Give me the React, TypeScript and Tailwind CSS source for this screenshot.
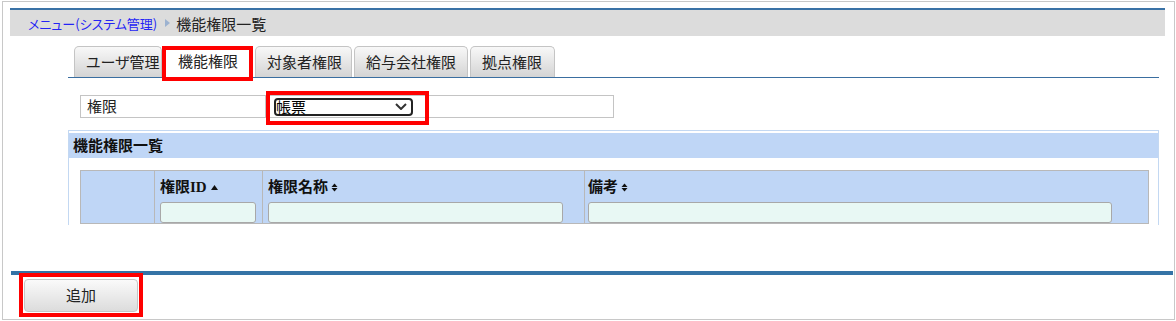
import React from 'react';

const jp = "font-['Noto_Sans_CJK_JP',sans-serif] [font-feature-settings:'palt']";
const head = "font-['Liberation_Serif','Noto_Sans_CJK_JP',serif] font-bold";

const tabs = [
  { label: 'ユーザ管理', w: 'w-[88px]' },
  { label: '機能権限', w: 'w-[89px]', active: true },
  { label: '対象者権限', w: 'w-[97px]' },
  { label: '給与会社権限', w: 'w-[114px]' },
  { label: '拠点権限', w: 'w-[85px]' },
];

function SortUp() {
  return (
    <svg width="7" height="5" viewBox="0 0 7 5" className="ml-[4px]">
      <path d="M0 5 L3.5 0 L7 5 Z" fill="#111" />
    </svg>
  );
}

function SortBoth() {
  return (
    <svg width="7" height="9" viewBox="0 0 7 9" className="ml-[3px]">
      <path d="M0.5 4 L3.5 0.5 L6.5 4 Z" fill="#111" />
      <path d="M0.5 5 L3.5 8.5 L6.5 5 Z" fill="#111" />
    </svg>
  );
}

function RedFrame({ className }: { className: string }) {
  return <div className={`absolute border-[4px] border-[#ff0000] pointer-events-none ${className}`} />;
}

export default function App() {
  return (
    <div className={`w-[1176px] h-[321px] bg-white ${jp} text-[#222]`}>
      <div className="ml-[2px] mt-[1px] w-[1173px] h-[319px] border border-[#c8c8c8] bg-white overflow-hidden flex flex-col">
        {/* breadcrumb */}
        <div className="ml-[7px] mt-[6px] w-[1155px] h-[28px] border-t-2 border-[#3a72a6] bg-[#dcdcdc] flex items-center pl-[18px]">
          <span className="text-[13px] text-[#2424f5] leading-none">メニュー(システム管理)</span>
          <svg width="5" height="8" viewBox="0 0 5 8" className="ml-[8px] mr-[6px]">
            <path d="M0 0 L5 4 L0 8 Z" fill="#9cb2d0" />
          </svg>
          <span className="text-[15px] leading-none">機能権限一覧</span>
        </div>

        <div className="h-[235px] flex flex-col shrink-0">
          {/* tabs */}
          <div className="ml-[65px] mt-[10px] w-[1091px] h-[32px] border-b border-[#3a6ea0] flex items-end gap-[2px] pl-[6px]">
            {tabs.map((t) =>
              t.active ? (
                <div key={t.label} className={`relative ${t.w} h-[31px] bg-white flex items-center pl-[14px] text-[15px]`}>
                  {t.label}
                  <RedFrame className="left-[-2px] top-0 w-[91px] h-[35px]" />
                </div>
              ) : (
                <div
                  key={t.label}
                  className={`${t.w} h-[31px] border border-b-0 border-[#c4c4c4] rounded-t-[5px] bg-linear-to-b from-[#f8f8f8] to-[#d4d4d4] flex items-center pl-[11px] text-[15px]`}
                >
                  {t.label}
                </div>
              )
            )}
          </div>

          {/* 権限 row */}
          <div className="relative ml-[77px] mt-[17px] flex h-[23px]">
            <div className="w-[186px] h-full border border-[#c4c4c4] bg-white flex items-center pl-[6px] text-[15px]">権限</div>
            <div className="w-[348px] h-full border border-l-0 border-[#c4c4c4] bg-white flex items-center pl-[8px]">
              <div className="w-[139px] h-[18px] border-2 border-[#222] rounded-[4px] flex items-center justify-between pl-0 pr-[4px] text-[15px] text-black">
                <span className="leading-none">帳票</span>
                <svg width="12" height="7" viewBox="0 0 12 7">
                  <path d="M1 1 L6 6 L11 1" fill="none" stroke="#333" strokeWidth="2" />
                </svg>
              </div>
            </div>
            <RedFrame className="left-[186px] top-[-4px] w-[163px] h-[34px]" />
          </div>

          {/* list section */}
          <div className="ml-[65px] mt-[12px] w-[1091px] h-[95px] border border-b-0 border-[#c3d8f2] overflow-hidden pt-[2px]">
            <div className="h-[25px] bg-[#bfd6f6] flex items-center pl-[4px] text-[15px] font-bold text-[#111]">機能権限一覧</div>
            <div className="ml-[11px] mt-[12px] w-[1069px] h-[54px] border border-[#b8b8b8] bg-[#bfd6f6] grid grid-cols-[73px_108px_322px_1fr]">
              <div />
              <div className="border-l border-[#b8b8b8] pl-[5px] pt-[9px]">
                <div className={`flex items-center text-[15px] leading-[15px] text-[#111] ${head}`}>権限ID<SortUp /></div>
                <div className="mt-[7px] w-[96px] h-[21px] bg-[#e8f8f4] border border-[#a8a8a8] rounded-[3px]" />
              </div>
              <div className="border-l border-[#b8b8b8] pl-[5px] pt-[9px]">
                <div className={`flex items-center text-[15px] leading-[15px] text-[#111] ${head}`}>権限名称<SortBoth /></div>
                <div className="mt-[7px] w-[295px] h-[21px] bg-[#e8f8f4] border border-[#a8a8a8] rounded-[3px]" />
              </div>
              <div className="border-l border-[#b8b8b8] pl-[3px] pt-[9px]">
                <div className={`flex items-center text-[15px] leading-[15px] text-[#111] ${head}`}>備考<SortBoth /></div>
                <div className="mt-[7px] w-[524px] h-[21px] bg-[#e8f8f4] border border-[#a8a8a8] rounded-[3px]" />
              </div>
            </div>
          </div>
        </div>

        {/* footer bar */}
        <div className="ml-[8px] w-[1162px] h-[4px] shrink-0 bg-[#3573a6]" />
        <div className="relative ml-[21px] mt-[4px] w-[114px] h-[33px] shrink-0">
          <button className="w-full h-full border border-[#c6c6c6] rounded-[4px] bg-linear-to-b from-[#fafafa] to-[#dcdcdc] text-[15px] text-[#222] flex items-center justify-center">
            追加
          </button>
          <RedFrame className="left-[-5px] top-[-6px] w-[124px] h-[44px]" />
        </div>
      </div>
    </div>
  );
}
